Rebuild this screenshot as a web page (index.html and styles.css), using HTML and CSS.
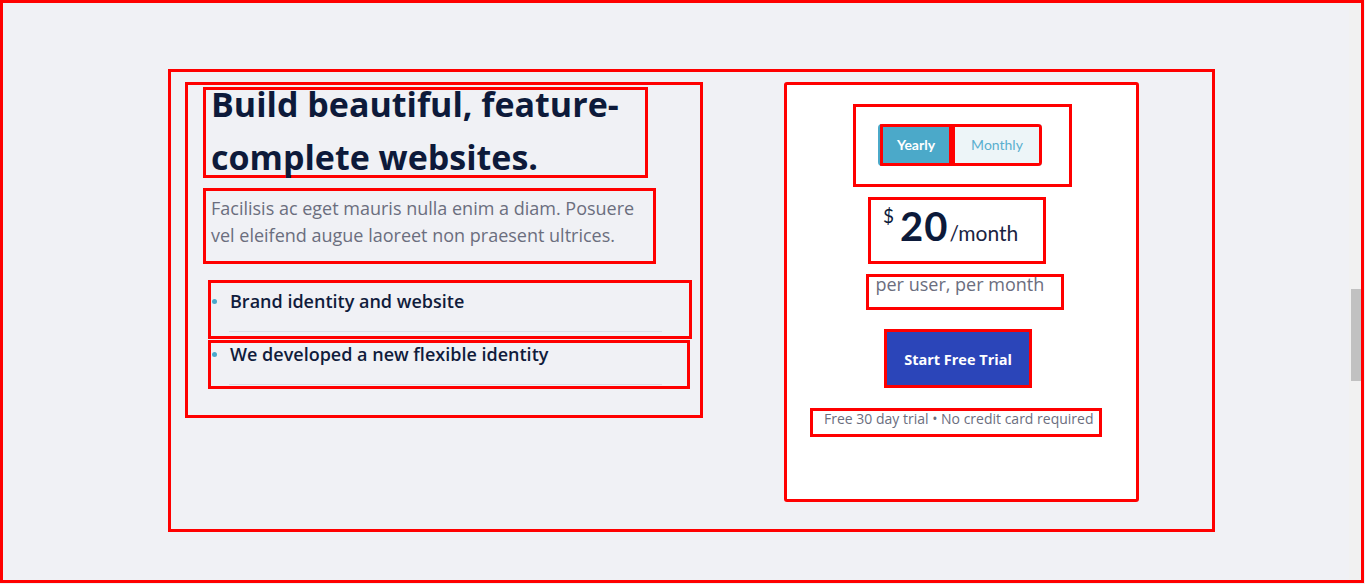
FILE: index.html
```html
<!DOCTYPE html>
<html lang="en">
<head>
<meta charset="utf-8">
<title>Pricing</title>
<link rel="stylesheet" href="styles.css">
</head>
<body>
<div class="screen">
  <main class="viewport">
    <section class="hero">
      <div class="intro">
        <h1 class="title"><span class="title-text">Build beautiful, feature-complete websites.</span></h1>
        <p class="lead">Facilisis ac eget mauris nulla enim a diam. Posuere vel eleifend augue laoreet non praesent ultrices.</p>
        <ul class="features">
          <li class="feature feature-first">
            <div class="feature-row"><span class="dot"></span><span>Brand identity and website</span></div>
            <div class="rule"></div>
          </li>
          <li class="feature feature-second">
            <div class="feature-row"><span class="dot"></span><span>We developed a new flexible identity</span></div>
            <div class="rule"></div>
          </li>
        </ul>
      </div>
      <div class="card">
        <div class="toggle-box">
          <div class="toggle">
            <button class="opt opt-active">Yearly</button>
            <button class="opt opt-plain">Monthly</button>
          </div>
        </div>
        <div class="price"><span class="cur">$</span><span class="amount">20</span><span class="period">/month</span></div>
        <p class="per">per user, per month</p>
        <button class="cta">Start Free Trial</button>
        <p class="note">Free 30 day trial • No credit card required</p>
      </div>
    </section>
  </main>
  <div class="scrollbar"><div class="thumb"></div></div>
</div>
</body>
</html>
```
FILE: styles.css
```css
* { box-sizing: border-box; }
body {
  margin: 0;
  background: #f0f1f5;
  font-family: "Open Sans", sans-serif;
}
.screen {
  width: 1364px;
  height: 583px;
  border: 3px solid #ff0000;
  display: flex;
}
.viewport { flex: 1; min-width: 0; }
.scrollbar {
  width: 12px;
  background: #f1f1f1;
  padding-top: 286px;
}
.thumb {
  margin-left: 2px;
  width: 10px;
  height: 92px;
  background: #c1c1c1;
}
.hero {
  margin: 66px 0 0 165px;
  width: 1047px;
  height: 463px;
  border: 3px solid #ff0000;
  display: flex;
  align-items: flex-start;
  gap: 81px;
  padding: 10px 0 0 14px;
}
.intro {
  width: 518px;
  height: 336px;
  border: 3px solid #ff0000;
}
.title {
  margin: 2px 0 0 15px;
  width: 445px;
  height: 91px;
  border: 3px solid #ff0000;
  padding-left: 5px;
  font-size: 34px;
  font-weight: 700;
  line-height: 53px;
  color: #0d1a3a;
}
.title-text { display: block; margin-top: -12px; }
.lead {
  margin: 10px 0 0 15px;
  width: 453px;
  height: 76px;
  border: 3px solid #ff0000;
  padding: 3.5px 8px 0 5px;
  font-size: 18px;
  line-height: 27px;
  color: #6b6e7e;
}
.features { list-style: none; margin: 16px 0 0; padding: 0; }
.feature { margin-left: 20px; border: 3px solid #ff0000; }
.feature-first { width: 484px; height: 59px; padding-top: 6.2px; }
.feature-second { width: 482px; height: 49px; margin-top: 1px; padding-top: 0; }
.feature-row {
  display: flex;
  align-items: center;
  font-size: 18px;
  font-weight: 600;
  line-height: 25px;
  color: #101c3c;
}
.feature-second .feature-row { margin-top: -1px; }
.dot {
  width: 5px;
  height: 5px;
  border-radius: 50%;
  background: #4ba8cb;
  margin: 0 13px 0 1px;
}
.rule {
  margin: 17px 0 0 18px;
  width: 433px;
  height: 1px;
  background: #dcdde6;
}
.card {
  width: 355px;
  height: 420px;
  border: 3px solid #ff0000;
  background: #fff;
  border-radius: 3px;
  display: flex;
  flex-direction: column;
  align-items: center;
}
.toggle-box {
  margin: 19px 0 0 2px;
  width: 219px;
  height: 83px;
  border: 3px solid #ff0000;
  padding: 17px 0 0 22px;
}
.toggle {
  display: flex;
  width: 164px;
  height: 42px;
  border-radius: 4px;
  overflow: hidden;
  background: #4ba9c9;
  padding-left: 2px;
}
.opt {
  height: 42px;
  border: 3px solid #ff0000;
  padding: 0 0 2px;
  display: flex;
  align-items: center;
  justify-content: center;
  font-family: Lato, sans-serif;
  font-size: 14px;
}
.opt-active { width: 72px; background: #4ba9c9; color: #fff; font-weight: 700; }
.opt-plain { width: 90px; background: #edf5f8; color: #5aafcf; font-weight: 400; }
.price {
  margin: 10px 9px 0 0;
  width: 178px;
  height: 67px;
  border: 3px solid #ff0000;
  padding: 6px 0 0 12px;
  display: flex;
  align-items: baseline;
  font-family: Lato, sans-serif;
  color: #0c1a3a;
}
.cur { align-self: flex-start; font-size: 19px; line-height: 19px; margin-top: 0; }
.amount {
  font-size: 40px;
  font-weight: 700;
  line-height: 40px;
  margin-left: 6px;
  letter-spacing: 1px;
}
.period { font-size: 21px; line-height: 21px; margin-left: 1px; color: #1a2442; }
.per {
  margin: 10px 0 0 6px;
  width: 198px;
  height: 36px;
  border: 3px solid #ff0000;
  padding-left: 7px;
  font-size: 18px;
  line-height: 15px;
  color: #6b6e7e;
  white-space: nowrap;
}
.cta {
  margin: 19px 7px 0 0;
  width: 148px;
  height: 59px;
  border: 3px solid #ff0000;
  background: #2b45b9;
  color: #fff;
  font-family: "Open Sans", sans-serif;
  font-size: 14.5px;
  font-weight: 700;
  display: flex;
  align-items: center;
  justify-content: center;
  padding: 1px 0 0;
}
.note {
  margin: 20px 11px 0 0;
  width: 292px;
  height: 29px;
  border: 3px solid #ff0000;
  padding-left: 11px;
  font-size: 14px;
  line-height: 15px;
  color: #6b6e7e;
  white-space: nowrap;
}
```
